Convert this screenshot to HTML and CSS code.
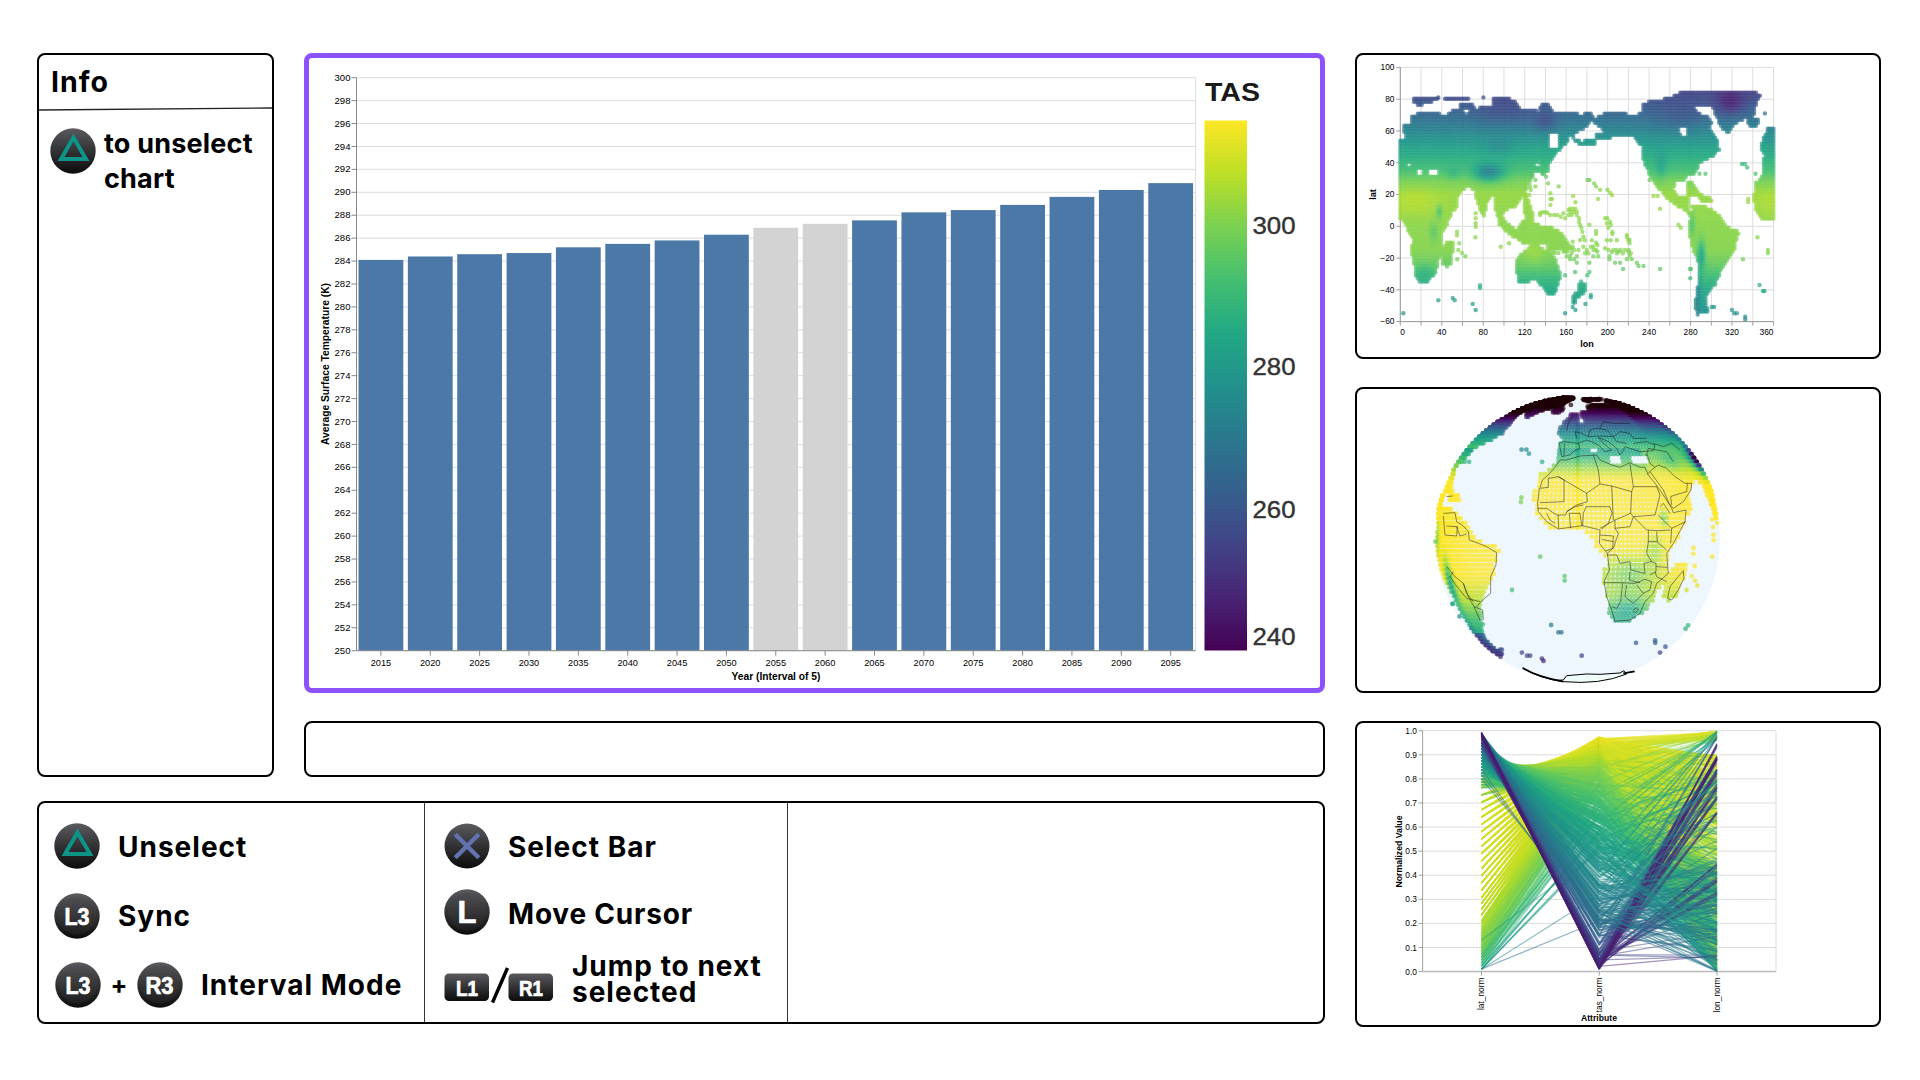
FILE: index.html
```html
<!DOCTYPE html>
<html lang="en">
<head>
<meta charset="utf-8">
<title>Surface temperature dashboard</title>
<link rel="stylesheet" href="styles.css">
</head>
<body>
<svg class="defs" width="0" height="0" aria-hidden="true">
  <defs>
    <linearGradient id="button-face" x1="0" y1="0" x2="0" y2="1">
      <stop offset="0" stop-color="#5b5a5f"/><stop offset=".5" stop-color="#323134"/><stop offset="1" stop-color="#0c0c0c"/>
    </linearGradient>
    <linearGradient id="button-inner" x1="0" y1="0" x2="0" y2="1">
      <stop offset="0" stop-color="#504f53"/><stop offset="1" stop-color="#1d1d1f"/>
    </linearGradient>
    <symbol id="triangle" viewBox="0 0 46 46">
      <circle cx="23" cy="23" r="22.7" fill="url(#button-face)"/>
      <path d="M23.5 9.5 L36 31 H11 Z" fill="none" stroke="#0d9488" stroke-width="4"/>
    </symbol>
    <symbol id="cross" viewBox="0 0 46 46">
      <circle cx="23" cy="23" r="22.5" fill="url(#button-face)"/>
      <path d="M11.2 11.2 L34.8 34.8 M34.8 11.2 L11.2 34.8" stroke="#6272b0" stroke-width="4.4"/>
    </symbol>
    <symbol id="stick" viewBox="0 0 46 46">
      <circle cx="23" cy="23" r="22.7" fill="url(#button-face)"/>
      <circle cx="23" cy="22.5" r="19" fill="url(#button-inner)"/>
    </symbol>
  </defs>
</svg>
<main class="dashboard">
  <div class="workspace">
    <div class="upper">
      <aside class="panel info">
        <h1 class="info-title">Info</h1>
        <svg class="info-rule" viewBox="0 0 233 4" preserveAspectRatio="none"><path d="M0 3 L233 1" stroke="#222" stroke-width="1.4"/></svg>
        <div class="hint">
          <svg class="icon"><use href="#triangle"/></svg>
          <p class="hint-text">to unselect<br>chart</p>
        </div>
      </aside>
      <div class="center">
        <section class="panel selected"><svg id="bars" class="chart" viewBox="309 58 1011 630"></svg></section>
        <section class="panel message"></section>
      </div>
    </div>
    <section class="panel controls">
      <div class="group group-a">
        <div class="row"><svg class="icon"><use href="#triangle"/></svg><span class="label">Unselect</span></div>
        <div class="row"><svg class="icon"><use href="#stick"/><text x="23" y="31.5" class="key key-small" textLength="25" lengthAdjust="spacingAndGlyphs">L3</text></svg><span class="label sync">Sync</span></div>
        <div class="row combo"><svg class="icon"><use href="#stick"/><text x="23" y="31.5" class="key key-small" textLength="25" lengthAdjust="spacingAndGlyphs">L3</text></svg><span class="plus">+</span><svg class="icon"><use href="#stick"/><text x="22.5" y="31.5" class="key key-small" textLength="28" lengthAdjust="spacingAndGlyphs">R3</text></svg><span class="label interval">Interval Mode</span></div>
      </div>
      <div class="group group-b">
        <div class="row"><svg class="icon"><use href="#cross"/></svg><span class="label">Select Bar</span></div>
        <div class="row"><svg class="icon"><use href="#stick"/><text x="23" y="33.5" class="key key-large">L</text></svg><span class="label cursor">Move Cursor</span></div>
        <div class="row jump">
          <svg class="shoulders" viewBox="444 962 110 42">
            <rect x="444.5" y="970.5" width="44.5" height="27.5" rx="4.5" fill="url(#button-face)"/>
            <rect x="508.5" y="970.5" width="44.5" height="27.5" rx="4.5" fill="url(#button-face)"/>
            <text x="467" y="992.5" class="key key-shoulder" textLength="22" lengthAdjust="spacingAndGlyphs">L1</text>
            <text x="531" y="992.5" class="key key-shoulder" textLength="24" lengthAdjust="spacingAndGlyphs">R1</text>
            <path d="M492.5 999.5 L507.5 965" stroke="#000" stroke-width="3.4"/>
          </svg>
          <span class="label two-line">Jump to next<br>selected</span>
        </div>
      </div>
    </section>
  </div>
  <div class="side">
    <section class="panel"><svg id="map" class="chart" viewBox="1357 55 522 302"></svg></section>
    <section class="panel"><svg id="globe" class="chart" viewBox="1357 389 522 302"></svg></section>
    <section class="panel"><svg id="parallel" class="chart" viewBox="1357 723 522 302"></svg></section>
  </div>
</main>
<script src="charts.js"></script>
</body>
</html>
```
FILE: styles.css
```css
* { box-sizing: border-box; }
body { margin: 0; width: 1920px; height: 1080px; background: #fff; color: #000; font-family: Inter, "Liberation Sans", sans-serif; overflow: hidden; }
.defs { display: block; }
.dashboard { display: flex; gap: 30px; padding: 53px 39px 0 37px; }
.workspace { display: flex; flex-direction: column; gap: 24px; width: 1288px; }
.upper { display: flex; gap: 30px; height: 724px; }
.center { display: flex; flex-direction: column; gap: 28px; width: 1021px; }
.panel { border: 2px solid #000; border-radius: 8px; background: #fff; overflow: hidden; }
.panel.selected { height: 640px; border: 5px solid #8c52ff; }
.message { flex: 1; }
.side { display: flex; flex-direction: column; gap: 28px; width: 526px; }
.side .panel { height: 306px; }
.chart { display: block; width: 100%; height: 100%; }

.info { width: 237px; }
.info-title { margin: 0; padding: 8px 0 0 12px; height: 52px; font-size: 28.5px; line-height: 38px; font-weight: 700; letter-spacing: 1px; }
.info-rule { display: block; width: 100%; height: 4px; }
.hint { display: flex; gap: 8px; padding: 17px 0 0 11px; }
.hint-text { margin: -2px 0 0; font-size: 27px; line-height: 35px; font-weight: 700; letter-spacing: 0.2px; white-space: nowrap; }
.icon { width: 46px; height: 46px; flex: none; }

.controls { display: flex; height: 223px; }
.group { display: flex; flex-direction: column; border-right: 1px solid #333; }
.group-a { width: 386px; padding: 20px 0 0 15px; gap: 24px; }
.group-b { width: 363px; padding: 20px 0 0 19px; gap: 20px; }
.row { display: flex; align-items: center; height: 46px; white-space: nowrap; }
.label { margin-left: 18px; padding-top: 1px; font-size: 28px; line-height: 30px; font-weight: 700; letter-spacing: 1px; }
.sync, .interval { padding-top: 0; }
.cursor { padding-top: 4px; letter-spacing: 0.8px; }
.combo { padding-left: 1px; position: relative; top: -1px; }
.plus { width: 36px; text-align: center; font-size: 25px; font-weight: 700; }
.interval { margin-left: 18px; }
.jump { height: 54px; }
.shoulders { width: 110px; height: 42px; margin-top: 8px; }
.two-line { line-height: 26px; margin-top: -8px; }

.key { fill: #fff; stroke: #fff; stroke-width: 0.7px; font-family: "Liberation Sans", sans-serif; font-weight: 700; text-anchor: middle; }
.key-small { font-size: 24px; }
.key-large { font-size: 31px; }
.key-shoulder { font-size: 22px; }

.chart text { font-family: "Liberation Sans", Arial, sans-serif; fill: #000; }
.tick { font-size: 9px; }
.tick-s { font-size: 8.4px; }
.axis-title { font-size: 10px; font-weight: 700; text-anchor: middle; }
.axis-title-s { font-size: 9px; font-weight: 700; text-anchor: middle; }
.end { text-anchor: end; }
.mid { text-anchor: middle; }
.chart .legend-title { font-size: 25px; font-weight: 700; fill: #1a1a1a; }
.chart .legend-tick { font-size: 24px; fill: #333; stroke: #333; stroke-width: 0.4px; }
```
FILE: charts.js
```js
const VIRIDIS = [[68,1,84],[72,36,117],[65,68,135],[53,95,141],[42,120,142],[33,145,140],[34,168,132],[68,191,112],[122,209,81],[189,223,38],[253,231,37]];
const DARK = [32, 0, 8];
function mix(a, b, t) { return 'rgb(' + a.map((v, i) => Math.round(v + (b[i] - v) * t)).join() + ')'; }
function viridis(t) {
  if (t < 0) return mix(VIRIDIS[0], DARK, Math.min(1, -t * 5));
  const p = Math.min(0.9999, t) * 10, i = Math.floor(p);
  return mix(VIRIDIS[i], VIRIDIS[i + 1], p - i);
}
let seed = 7;
function rnd() { seed = (seed * 16807) % 2147483647; return seed / 2147483647; }
const line = (x1, y1, x2, y2, c, w = 1) => `<path d="M${x1} ${y1}L${x2} ${y2}" stroke="${c}" stroke-width="${w}"/>`;
const text = (x, y, s, cls, extra = '') => `<text x="${x}" y="${y}" class="${cls}" ${extra}>${s}</text>`;
const GRID = '#ddd', AXIS = '#888';
function interp(pts, v) {
  for (let i = 1; i < pts.length; i++) if (v <= pts[i][0]) {
    const [a, p] = pts[i - 1], [b, q] = pts[i];
    return p + (q - p) * (v - a) / (b - a);
  }
  return pts[pts.length - 1][1];
}

/* Bar chart with colour legend */
(function () {
  const values = [284.1,284.4,284.6,284.7,285.2,285.5,285.8,286.3,286.9,287.25,287.55,288.25,288.45,288.9,289.6,290.2,290.8];
  const L = 356.5, R = 1195.7, B = 650.7, k = (650.7 - 77.7) / 50, step = 49.36;
  let o = '';
  for (let v = 250; v <= 300; v += 2) {
    const y = B - (v - 250) * k;
    o += line(L, y, R, y, GRID) + line(L - 5, y, L, y, AXIS) + text(350.5, y + 3.1, v, 'tick end', 'textLength="16" lengthAdjust="spacingAndGlyphs"');
  }
  o += line(R, 77.7, R, B, GRID);
  values.forEach((v, i) => {
    const x = L + 2 + i * step, h = (v - 250) * k, c = x + 22.4;
    o += `<rect x="${x}" y="${B - h}" width="44.8" height="${h}" fill="${i === 8 || i === 9 ? '#d3d3d3' : '#4c78a8'}"/>`;
    o += line(c, B, c, B + 5, AXIS) + text(c, 665.5, 2015 + i * 5, 'tick mid', 'textLength="20.5" lengthAdjust="spacingAndGlyphs"');
  });
  o += line(L, 77.7, L, B, AXIS) + line(L, B, R, B, AXIS);
  o += text(776, 679.5, 'Year (Interval of 5)', 'axis-title', 'textLength="89" lengthAdjust="spacingAndGlyphs"');
  o += text(0, 0, 'Average Surface Temperature (K)', 'axis-title', 'transform="translate(329 364) rotate(-90)" textLength="162" lengthAdjust="spacingAndGlyphs"');
  o += '<defs><linearGradient id="scale" x1="0" y1="1" x2="0" y2="0">' + VIRIDIS.map((c, i) => `<stop offset="${i / 10}" stop-color="rgb(${c})"/>`).join('') + '</linearGradient></defs>';
  o += '<rect x="1204.5" y="120.5" width="42.5" height="530" fill="url(#scale)"/>';
  o += text(1205, 101, 'TAS', 'legend-title', 'textLength="55" lengthAdjust="spacingAndGlyphs"');
  [[300, 225.5], [280, 366.5], [260, 509.5], [240, 636.5]].forEach(([v, y]) => { o += text(1252.5, y + 8.5, v, 'legend-tick', 'textLength="43" lengthAdjust="spacingAndGlyphs"'); });
  document.getElementById('bars').innerHTML = o;
})();

/* Land outlines on a plate carree grid, 3 units per pixel; origin (151, 52) is lon 0, lat 100 */
const LAND = [
  [148,272,165,262,160,228,182,218,185,200,212,186,250,186,275,193,305,190,308,176,332,178,330,160,368,158,374,178,400,166,430,166,430,140,462,140,500,155,508,176,556,178,568,190,568,168,590,157,605,172,610,188,665,188,690,192,725,190,732,208,700,238,678,250,655,262,650,280,628,300,610,325,595,340,596,365,578,378,568,365,550,370,552,385,535,395,532,420,515,438,505,460,492,475,480,470,470,482,440,500,434,470,436,440,428,437,412,455,405,505,398,500,385,470,376,445,372,420,352,412,338,420,325,440,325,465,308,488,290,530,278,550,276,590,282,602,262,635,262,655,250,680,230,698,205,698,195,670,190,635,182,610,188,570,168,530,165,520,148,507],
  [436,455,498,445,490,470,450,480,462,510,500,540,525,505,520,440,528,425,540,460,548,490,550,520,600,530,630,545,655,575,668,602,650,606,592,600,590,580,545,580,522,583,500,568,470,548,448,525,440,490],
  [498,628,525,600,548,580,570,588,585,600,605,605,622,640,632,680,614,738,595,735,575,710,555,688,535,697,505,697,498,660],
  [688,690,710,705,705,725,680,748,680,768,664,762,668,738,684,720],
  [725,208,765,188,830,188,832,195,875,190,880,160,920,148,955,145,985,128,1220,128,1238,140,1222,150,1215,185,1205,205,1165,212,1150,228,1132,250,1112,232,1098,200,1085,168,1030,168,1045,190,1068,195,1084,215,1080,240,1102,265,1108,300,1085,322,1050,340,1035,375,1010,380,1005,395,975,395,972,420,985,435,1018,440,1015,475,1040,462,1085,475,1110,500,1135,530,1167,545,1150,610,1120,650,1095,705,1072,735,1070,765,1078,788,1042,794,1032,760,1042,720,1045,640,1025,590,1015,550,1020,500,1000,480,960,455,920,410,895,370,878,330,875,290,850,262,800,255,770,268,735,270,735,256,765,242,745,232],
  [1008,395,1030,398,1045,430,1080,440,1085,452,1060,457,1040,440,1010,435],
  [1188,210,1225,203,1230,225,1200,232], [182,150,195,138,240,138,268,144,235,160,205,168],
  [285,138,360,138,360,147,285,147], [668,260,690,273,735,270,737,288,700,288,675,275],
  [1230,290,1240,265,1250,235,1272,230,1272,320,1245,318,1232,300],
  [1238,320,1272,320,1272,508,1235,507,1215,480,1210,440,1215,400,1240,372],
  [272,605,285,580,300,572,312,580,305,640,288,652,276,640]
];
const HOLES = [[598,252,628,252,628,292,608,300,598,292],[985,234,1010,234,1012,260,998,258,985,246],[202,353,214,356,220,374,202,378],[230,378,240,356,262,362,262,378],[556,345,572,330,575,346,558,350],[340,178,358,178,348,194],[1018,470,1030,470,1030,482,1018,482],[170,338,182,338,182,348,170,348]];
function inside(p, x, y) {
  let hit = false;
  for (let i = 0, j = p.length - 2; i < p.length; j = i, i += 2)
    if ((p[i + 1] > y) !== (p[j + 1] > y) && x < (p[j] - p[i]) * (y - p[i + 1]) / (p[j + 1] - p[i + 1]) + p[i]) hit = !hit;
  return hit;
}
const ISLES = [[160,790],[265,751],[308,744],[314,751],[368,762],[377,780],[390,706],[390,714],[452,590],[477,580],[346,619],[325,600],[322,628],[328,580],[321,545],[321,556],[376,562],[377,520],[377,505],[377,530],[377,490],[336,609],[645,790],[668,771],[676,780],[706,762],[722,735],[722,742],[645,676],[675,666],[712,676],[718,666],[819,657],[930,657],[1020,657],[1020,685],[1022,657],[1178,628],[1222,562],[1253,600],[1253,609],[1228,705],[1238,723],[1243,723],[1145,780],[1152,790],[1160,790],[1185,800],[1185,808],[1085,771],[1092,771],[1244,190],[1175,342],[1184,342],[1191,352],[1194,447],[1194,456],[1216,371],[1066,371],[1048,371],[985,524],[992,533],[930,476],[910,438],[922,438],[898,390],[712,390],[718,390],[732,400],[738,409],[750,419],[772,419],[780,428],[786,436],[744,447],[669,438],[676,457],[588,380],[594,400],[626,409],[556,409],[538,400],[601,430],[601,447],[606,447],[601,465],[570,495],[578,487],[585,487],[600,495],[612,495],[622,495],[632,500],[645,505],[660,476],[668,476],[676,476],[680,485],[665,495],[680,495],[687,505],[687,515],[690,525],[694,533],[697,545],[700,560],[704,571],[718,524],[765,505],[772,505],[780,515],[782,524],[775,533],[787,545],[787,552],[738,543],[738,552],[725,571],[738,578],[742,585],[770,571],[782,571],[800,571],[831,562],[835,571],[838,580],[700,590],[722,590],[738,600],[710,600],[705,610],[715,610],[730,619],[744,619],[775,600],[790,600],[800,600],[812,600],[825,600],[836,600],[842,610],[818,610],[800,610],[778,619],[778,628],[795,638],[810,638],[830,628],[845,628],[860,638],[865,648],[880,648],[718,638],[680,638],[672,628],[660,628],[650,619],[680,619],[665,609],[625,609],[614,609],[400,142],[265,142],[545,375],[556,390],[540,410],[570,340],[577,335],[655,480],[662,486],[672,486],[655,495],[640,490],[592,488],[570,488],[542,420],[538,435],[610,605],[660,618],[690,570],[730,590],[730,600],[742,605],[785,606],[806,605],[835,606],[838,618],[838,570],[830,555],[668,590],[668,575],[672,600],[685,600],[770,520],[765,595]];
const D2R = Math.PI / 180;
const gauss = (a, b) => Math.exp(-(a * a + b * b));
const SOUTH = [[0,300.5],[15,300],[25,295],[35,286],[45,280],[56,273],[90,240]];
const NORTH = [[0,300.5],[20,302],[28,298],[35,290],[42,285],[50,279],[60,270],[70,261],[80,253],[90,246]];
function tempAt(lon, lat) {
  let t = interp(lat < 0 ? SOUTH : NORTH, Math.abs(lat));
  t -= 22 * gauss((lon - 86) / 14, (lat - 33.5) / 5.5) + 13 * gauss((lon - 319) / 14, (lat - 77) / 8) + 10 * gauss((lon - 140) / 12, (lat - 65) / 6);
  t -= 18 * gauss((lon - 291) / 3.5, (lat + 18) / 9) + 12 * gauss((lon - 287) / 3, (lat + 38) / 14) + 9 * gauss((lon - 282) / 2.5, (lat - 1) / 7);
  t -= 11 * gauss((lon - 38) / 2.5, (lat - 9) / 4) + 6 * gauss((lon - 33) / 4, (lat + 4) / 6) + 7 * gauss((lon - 252) / 5, (lat - 38) / 9);
  t -= 6 * gauss((lon - 95) / 14, (lat - 50) / 6) + 6 * gauss((lon - 270) / 25, (lat - 68) / 9) + 6 * gauss((lon - 100) / 30, (lat - 70) / 9) + 5 * gauss((lon - 24) / 8, (lat + 29) / 5);
  t -= 5 * gauss((lon - 52) / 7, (lat - 33) / 4);
  t += 4 * gauss((lon - 15) / 25, (lat - 15) / 9) + 3 * gauss((lon - 360) / 20, (lat - 15) / 9) + 3 * gauss((lon - 130) / 10, (lat + 19) / 6);
  return t;
}
const toLon = x => (x - 151) / 3.108, toLat = y => 100 - (y - 52) / 4.769;
function landDots(dLon, dLat) {
  const out = [];
  for (let lat = 84; lat > -60; lat -= dLat) for (let lon = 0; lon <= 360; lon += dLon) {
    const x = 151 + lon * 3.108, y = 52 + (100 - lat) * 4.769;
    if (LAND.some(p => inside(p, x, y)) && !HOLES.some(p => inside(p, x, y))) out.push([lon, lat, false]);
  }
  ISLES.forEach(([x, y]) => out.push([toLon(x), toLat(y), true]));
  return out;
}

/* Flat map */
(function () {
  const L = 1400.3, R = 1773.5, T = 67.4, B = 321.6;
  let o = '';
  for (let lon = 0; lon <= 360; lon += 20) {
    const x = L + (R - L) * lon / 360;
    o += line(x, T, x, B, GRID) + line(x, B, x, B + 4, AXIS, .8);
    if (lon % 40 === 0) o += text(lon === 0 ? x + 2.3 : lon === 360 ? x - 7 : x, 334.5, lon, 'tick-s mid');
  }
  for (let lat = -60; lat <= 100; lat += 20) {
    const y = B - (B - T) * (lat + 60) / 160;
    o += line(L, y, R, y, GRID) + line(L - 4, y, L, y, AXIS, .8) + text(1394.5, y + 2.8, String(lat).replace('-', '−'), 'tick-s end');
  }
  o += line(L, T, L, B, AXIS, .8) + line(L, B, R, B, AXIS, .8);
  o += text(1587, 347, 'lon', 'axis-title-s') + text(0, 0, 'lat', 'axis-title-s', 'transform="translate(1376 194.5) rotate(-90)"');
  landDots(1.875, 1.885).forEach(([lon, lat]) => {
    o += `<circle cx="${(L + lon * 1.0367).toFixed(1)}" cy="${(T + (100 - lat) * 1.589).toFixed(1)}" r="2.2" fill="${viridis((tempAt(lon, lat) - 234) / 81)}" fill-opacity=".7"/>`;
  });
  document.getElementById('map').innerHTML = o;
})();

/* Orthographic globe */
const BORDERS = [
  [420,325,427,300,445,285,465,262,480,240,500,240,540,228,590,225,600,240,635,255,660,262,690,248,720,262,735,262,745,285,765,310,790,345,815,385,820,398,858,390,855,425,820,490,800,520,805,580,770,610,760,640,735,665,720,700,690,720,645,724,635,690,620,650,612,605,628,570,622,520,598,490,600,450,560,440,545,437,475,447,440,425,415,395,413,370,418,325],
  [420,325,445,322,445,295,475,290], [475,290,492,300,492,365,420,368], [475,290,560,340,562,365,530,375,500,395,497,405,470,405,440,385,413,385],
  [560,340,600,312,635,318,640,420], [600,312,595,270,580,225], [635,318,695,335,692,400,645,420,600,445], [690,252,700,320,770,320], [695,335,700,320],
  [770,320,780,345,765,405,700,410,692,400], [558,380,630,380,636,400,625,430,605,448], [558,380,550,400,548,438], [508,400,540,400,545,437], [508,400,512,445], [474,405,476,445], [500,395,525,380,550,375],
  [440,400,450,420,465,430], [645,420,645,445,690,440,700,410], [700,410,740,450,775,452,812,450], [775,405,815,445,857,425], [815,445,812,490], [780,380,790,370,810,400],
  [600,465,640,468,638,505,622,520], [645,445,655,460,640,505,618,512], [605,478,640,485], [622,525,650,525,660,550,690,545,692,570,735,580,732,550,755,545],
  [745,450,745,485,740,520,755,545,768,550,768,575,750,585], [745,485,770,485,800,510], [770,455,772,485], [690,575,688,600,720,608], [612,608,660,608,705,610,735,598,755,605,750,630,730,640,710,615], [668,610,662,665,650,685,635,680],
  [680,615,675,650,700,670,730,640], [768,560,803,562], [700,692,708,683,716,690,706,698,700,692], [800,605,770,590,765,575],
  [850,572,852,595,835,630,815,660,803,655,810,620,830,595,850,572], [742,282,755,270,765,262,750,250,742,225,735,225], [750,275,790,330,808,372,820,385,850,365,873,330,875,310,855,310,825,290,800,265,775,255,765,262], [825,345,860,335,862,310], [815,375,812,350,825,345],
  [478,190,490,185,535,190,540,205,520,215,510,225,485,230,478,190], [535,190,560,180,575,185,595,195,615,215,635,210,610,190,595,172,625,185,650,205,660,225,668,215,675,200,690,205,720,215,760,212,765,195,740,185,700,190],
  [530,175,525,155,545,160,565,170,600,168,640,170,660,155,690,160,700,175,740,175], [565,170,570,150,590,145,620,150,640,170,650,185,680,190], [600,145,610,125,640,130,690,130], [740,225,745,205,770,210,800,215,820,245], [760,190,790,200,815,190,840,210], [500,150,505,130,518,110], [493,190,492,228],
  [130,400,165,398,170,425,190,438,205,455,208,480,235,490,260,500,290,518,288,555,272,590,272,640,248,660,230,680], [130,408,135,465,170,468,172,440,140,438], [170,440,180,468,200,462], [140,560,165,590,190,610,205,650,222,680,240,720], [190,610,200,640,220,665], [160,575,150,590,175,625,200,655,240,665], [222,680,248,690,250,720], [140,350,158,348]
];
(function () {
  const CX = 1577.6, CY = 539.5, R = 142.3;
  let o = `<circle cx="${CX}" cy="${CY}" r="${R}" fill="#eef6fe"/>`;
  const poly = p => 'M' + p.reduce((s, v, i) => s + v + (i % 2 ? (i < p.length - 1 ? 'L' : '') : ' '), '');
  o += '<g transform="translate(1400 380) scale(.33333)">';
  o += '<path d="M368 864Q420 896 490 905Q600 915 680 882L672 872L660 879L600 883L560 882L500 887L490 900L465 901" fill="#effcf9" stroke="#000" stroke-width="3"/><path d="M368 864Q410 890 490 905M670 880L704 874" fill="none" stroke="#000" stroke-width="5"/></g>';
  landDots(1.875, 1.885).forEach(([lon, lat, isle]) => {
    const l = lon > 180 ? lon - 360 : lon;
    if (Math.abs(l) > 91) return;
    const f = lat * D2R, x = CX + R * Math.cos(f) * Math.sin(l * D2R), y = CY - R * Math.sin(f);
    let t = (tempAt(lon, lat) - 254) / 46;
    t -= Math.max(0, Math.min(6, lat - 40)) * .014 + Math.max(0, lat - 46) * (Math.abs(l) > 45 ? .024 : .014) + Math.max(0, lat - 66) * .02;
    t -= .2 * gauss((l - 22) / 14, (lat + 14) / 7) + .45 * gauss((l - 89) / 5, (lat - 35) / 7) + .1 * gauss((l - 22) / 12, (lat + 29) / 7);
    if (lat > 24 && lat < 40 && l < 35) t -= .01 * (lat - 24);
    if (lat < -42) t -= .25;
    if (isle && l < 20 && lat > -42) t -= lat > 25 ? .1 : .25;
    o += `<circle cx="${x.toFixed(1)}" cy="${y.toFixed(1)}" r="2.4" fill="${viridis(t)}" fill-opacity=".7"/>`;
  });
  o += `<g transform="translate(1400 380) scale(.33333)" fill="none" stroke="#111" stroke-width="2" stroke-opacity=".72" stroke-linejoin="round">` + BORDERS.map(p => `<path d="${poly(p)}"/>`).join('') + '</g>';
  document.getElementById('globe').innerHTML = o;
})();

/* Parallel coordinates */
(function () {
  const L = 1422.6, R = 1776, T = 730.7, B = 971.6, X = [1481.4, 1599.2, 1717];
  const Y = v => B - (B - T) * v;
  let o = '';
  for (let i = 0; i <= 10; i++) o += line(L, Y(i / 10), R, Y(i / 10), GRID) + line(L - 4, Y(i / 10), L, Y(i / 10), AXIS, .8) + text(1417, Y(i / 10) + 3, (i / 10).toFixed(1), 'tick-s end');
  o += line(R, T, R, B, GRID) + line(L, T, L, B, AXIS, .8) + line(L, B, R, B, '#bbb', 1.5);
  const HI = [[0,.6],[.05,.84],[.1,.9],[.2,.94],[.3,.96],[.5,.97],[.7,.975],[.76,.96],[.8,.93],[.85,.87],[.9,.77],[.95,.6],[.98,.42],[1,.25]];
  const LO = [[0,.4],[.05,.66],[.1,.78],[.2,.88],[.3,.92],[.6,.93],[.7,.9],[.76,.75],[.82,.6],[.86,.45],[.9,.3],[.94,.06],[.97,.015],[1,.008]];
  const HUE = [[0,.06],[.03,.13],[.06,.2],[.12,.31],[.2,.38],[.35,.47],[.5,.55],[.65,.65],[.8,.78],[.88,.86],[.93,.93],[1,1]];
  const COLD = [.955,.9,.895,.84,.78,.73,.67,.45,.39,.33,.27,.22,.17,.08];
  const rows = [];
  for (let a = .01; a <= .992; a += a > .3 && a < .75 ? .0305 : a > .2 && a < .75 ? .024 : .0125) {
    const n = a < .05 ? 6 : a < .2 ? 10 : a < .75 ? 18 : a < .82 ? 16 : 32;
    for (let i = 0; i < n; i++) {
      const hi = interp(HI, a), lo = interp(LO, a), t = lo + (hi - lo) * (i ? rnd() : 1);
      let lon;
      if (t < .13) lon = COLD[Math.floor(rnd() * COLD.length)] - rnd() * .03;
      else if (t > .85) lon = rnd() < .08 ? .96 + rnd() * .04 : rnd() < .6 ? .6 + rnd() * .3 : rnd() * .6;
      else lon = rnd() < .04 ? .96 + rnd() * .04 : rnd() < .6 ? rnd() * .42 : rnd() * .84;
      rows.push([a, t, lon]);
    }
  }
  for (let i = 0; i < 40; i++) rows.push([.975 + rnd() * .018, .008 + rnd() * .045, COLD[i % 9] - rnd() * .02]);
  rows.push([.01, .21, .1], [.01, .32, .3], [.13, .5, .4], [.82, .19, .2], [.8, .22, .15], [.84, .16, .3]);
  const segment = (i, from, to, t) => `<path d="M${X[i]} ${Y(from).toFixed(1)}L${X[i + 1]} ${Y(to).toFixed(1)}" fill="none" stroke="${viridis(interp(HUE, t))}" stroke-width="1.25" stroke-opacity=".5"/>`;
  rows.sort((p, q) => q[1] - p[1]).forEach(([a, t]) => { o += segment(0, a, t, t); });
  rows.forEach(r => r.push(r[1] - (r[1] > .2 ? rnd() * .6 : 0)));
  rows.sort((p, q) => q[3] - p[3]).forEach(([, t, b]) => { o += segment(1, t, b, t); });
  ['lat_norm', 'tas_norm', 'lon_norm'].forEach((s, i) => {
    o += line(X[i], B, X[i], B + 4, AXIS, .8) + text(0, 0, s, 'tick-s end', `transform="translate(${X[i] + 2.5} 977.5) rotate(-90)"`);
  });
  o += text(1599, 1021, 'Attribute', 'axis-title-s', 'textLength="36" lengthAdjust="spacingAndGlyphs"');
  o += text(0, 0, 'Normalized Value', 'axis-title-s', 'transform="translate(1402 851.5) rotate(-90)" textLength="72" lengthAdjust="spacingAndGlyphs"');
  document.getElementById('parallel').innerHTML = o;
})();
```
